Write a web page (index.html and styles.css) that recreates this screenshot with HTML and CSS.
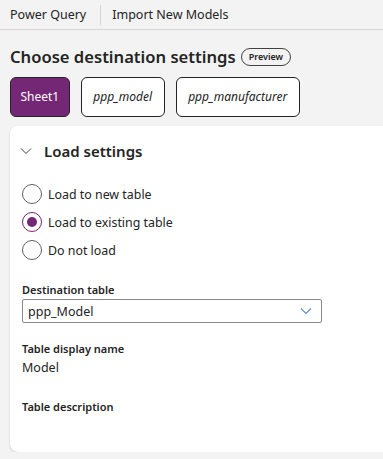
FILE: index.html
```html
<!DOCTYPE html>
<html>
<head lang="en">
    <meta charset="UTF-8">
    <title>Power Query</title>
    <link rel="stylesheet" href="styles.css">
</head>
<body>
<div class="topbar">
    <span class="crumb">Power Query</span>
    <span class="sep"></span>
    <span class="crumb">Import New Models</span>
</div>
<div class="main">
    <div class="title">
        <h1>Choose destination settings</h1>
        <span class="badge">Preview</span>
    </div>
    <div class="tabs">
        <div class="tab active">Sheet1</div>
        <div class="tab">ppp_model</div>
        <div class="tab">ppp_manufacturer</div>
    </div>
    <div class="card">
        <div class="section-head">
            <svg width="12" height="12" viewBox="0 0 12 12"><path d="M1 3.5 L6 8.5 L11 3.5" fill="none" stroke="#424242" stroke-width="1"/></svg>
            <span>Load settings</span>
        </div>
        <div class="radios">
            <label class="radio"><span class="dot"></span>Load to new table</label>
            <label class="radio checked"><span class="dot"></span>Load to existing table</label>
            <label class="radio"><span class="dot"></span>Do not load</label>
        </div>
        <div class="field">
            <div class="label">Destination table</div>
            <div class="select">
                <span>ppp_Model</span>
                <svg width="12" height="8" viewBox="0 0 12 8"><path d="M1 1.5 L6 6.5 L11 1.5" fill="none" stroke="#5b8fc7" stroke-width="1.1"/></svg>
            </div>
        </div>
        <div class="field">
            <div class="label">Table display name</div>
            <div class="value">Model</div>
        </div>
        <div class="field last">
            <div class="label">Table description</div>
        </div>
    </div>
</div>
</body>
</html>
```
FILE: styles.css
```css
* {
    margin: 0;
    padding: 0;
    box-sizing: border-box;
}

body {
    background-color: #f3f3f3;
    font-family: "Noto Sans", "Open Sans", sans-serif;
    color: #242424;
    overflow: hidden;
}

.topbar {
    height: 30px;
    display: flex;
    align-items: center;
    padding-left: 10px;
    border-bottom: 1px solid #d6d6d6;
    font-size: 12.5px;
}

.sep {
    width: 1px;
    height: 20px;
    background-color: #d6d6d6;
    margin: 0 11px 0 14px;
}

.main {
    padding: 15px 0 0 10px;
}

.title {
    display: flex;
    align-items: center;
}

.title h1 {
    font-size: 16.6px;
    font-weight: 600;
    line-height: 24px;
}

.badge {
    margin-left: 5px;
    height: 18px;
    padding: 0 7px;
    border: 1px solid #424242;
    border-radius: 9px;
    font-size: 9px;
    font-weight: 600;
    line-height: 16px;
}

.tabs {
    display: flex;
    gap: 11px;
    margin-top: 8px;
}

.tab {
    height: 40px;
    padding: 0 11.5px;
    border: 1px solid #242424;
    border-radius: 6px;
    background-color: #fff;
    font-size: 12px;
    font-style: italic;
    line-height: 38px;
}

.tab.active {
    background-color: #742774;
    color: #fff;
    font-style: normal;
    padding: 0 9.5px;
}

.card {
    margin-top: 9px;
    margin-right: -12px;
    height: 326px;
    background-color: #fff;
    border-radius: 8px;
    box-shadow: 0 1px 2px rgba(0, 0, 0, 0.18);
    padding: 15px 12px 0 12px;
}

.section-head {
    display: flex;
    align-items: center;
    gap: 12px;
    margin-left: -2px;
    height: 20px;
}

.section-head span {
    font-size: 15px;
    font-weight: 600;
}

.radios {
    margin-top: 19px;
}

.radio {
    display: flex;
    align-items: center;
    height: 28px;
    font-size: 12.4px;
}

.dot {
    width: 20px;
    height: 20px;
    border: 1px solid #616161;
    border-radius: 50%;
    margin-right: 6px;
    position: relative;
}

.radio.checked .dot {
    border-color: #742774;
}

.radio.checked .dot::after {
    content: "";
    position: absolute;
    left: 4px;
    top: 4px;
    width: 10px;
    height: 10px;
    border-radius: 50%;
    background-color: #742774;
}

.field {
    margin-top: 18px;
}

.field.last {
    margin-top: 23px;
}

.label {
    font-size: 11px;
    font-weight: 600;
    line-height: 16px;
}

.select {
    margin-top: 1px;
    width: 300px;
    height: 24px;
    border: 1px solid #8a8a8a;
    border-radius: 2px;
    display: flex;
    align-items: center;
    justify-content: space-between;
    padding: 0 9px 0 5px;
    font-size: 12.5px;
}

.value {
    margin-top: 2px;
    font-size: 12.5px;
}
```
